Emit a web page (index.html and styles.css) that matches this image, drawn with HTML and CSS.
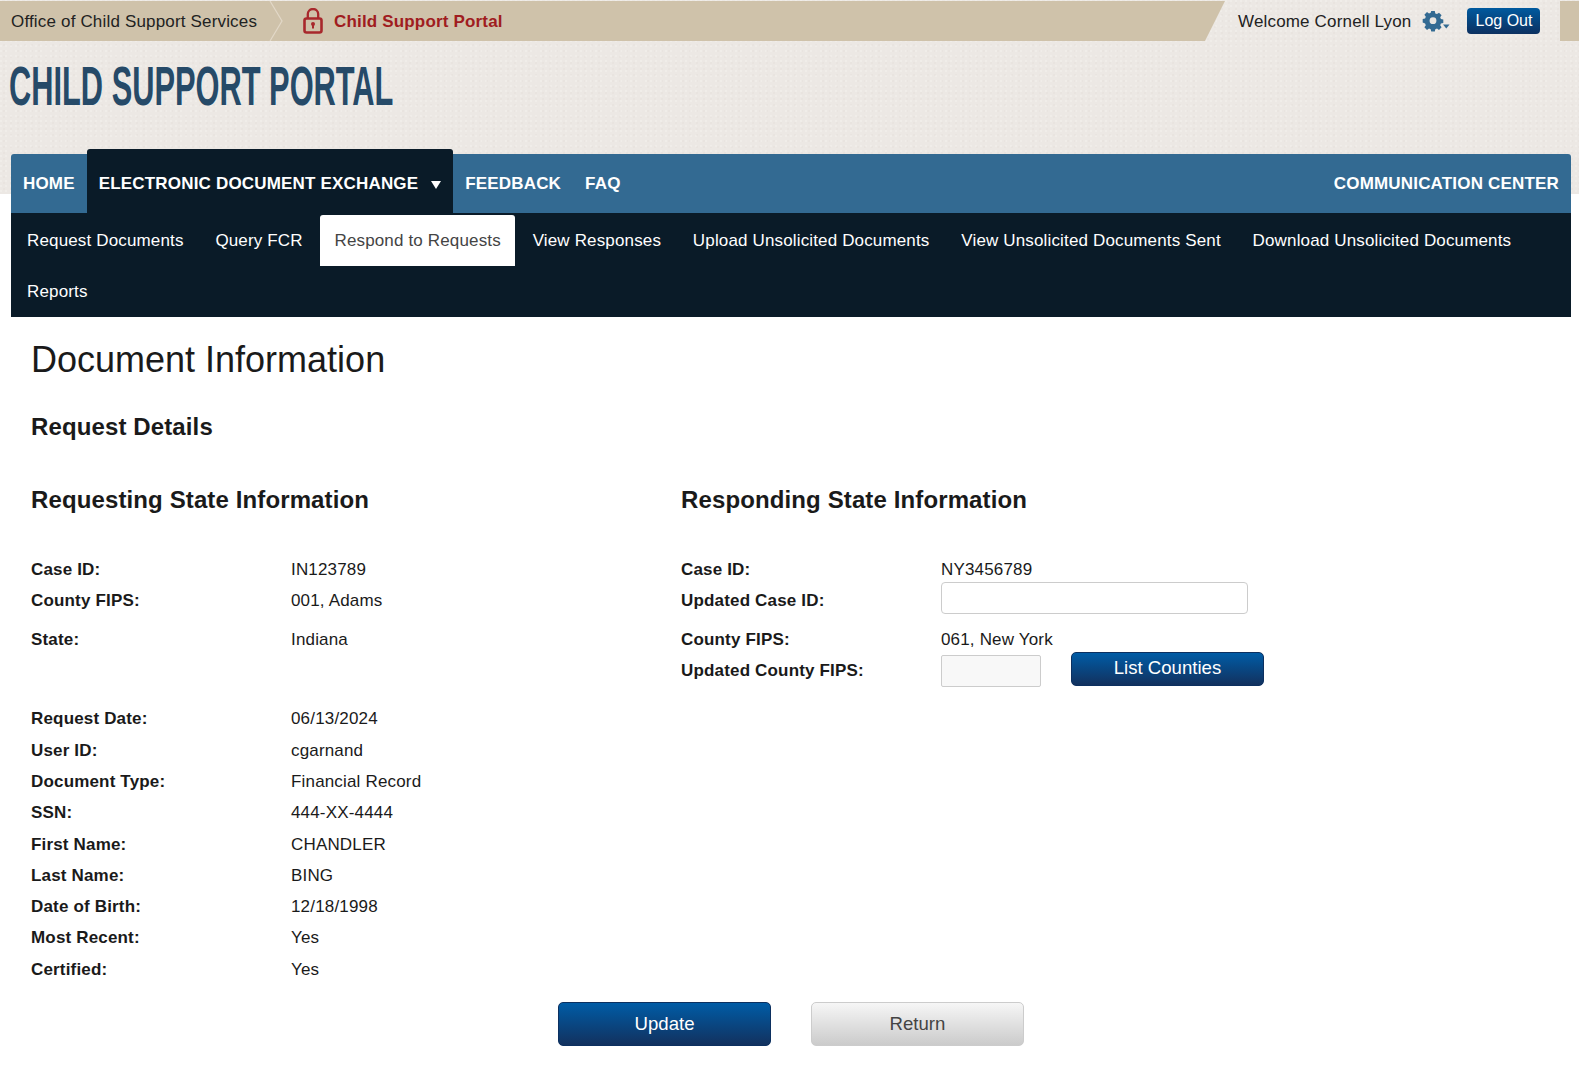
FILE: index.html
```html
<!DOCTYPE html>
<html lang="en">
<head>
<meta charset="utf-8">
<title>Child Support Portal</title>
<link rel="stylesheet" href="styles.css">
</head>
<body>
<header class="topbar">
  <div class="crumbs">
    <span class="office">Office of Child Support Services</span>
    <svg class="chevron" width="16" height="40" viewBox="0 0 16 40"><path d="M1 0 L13 20 L1 40" fill="none" stroke="#e2d8c8" stroke-width="1.2"/></svg>
    <svg class="lock" width="20" height="26" viewBox="0 0 20 26"><path d="M4.800 11 V6 a5.200 5 0 0 1 10.400 0 V11" fill="none" stroke="#a8282c" stroke-width="2.300"/><rect x="1.500" y="10.500" width="17" height="14" rx="2" fill="none" stroke="#a8282c" stroke-width="2.600"/><circle cx="10" cy="16" r="2" fill="#a8282c"/><rect x="9" y="16.500" width="2" height="4" fill="#a8282c"/></svg>
    <span class="portal">Child Support Portal</span>
  </div>
  <div class="user">
    <span class="welcome">Welcome Cornell Lyon</span>
    <svg class="gear" width="28" height="22" viewBox="0 0 28 22"><g fill="#336a92"><path d="M9.200 1h3.600l.5 2.400 1.700.7 2-1.400 2.600 2.600-1.400 2 .7 1.700 2.400.5v3.600l-2.400.5-.7 1.700 1.400 2-2.600 2.600-2-1.400-1.700.7-.5 2.400H9.200l-.5-2.400-1.700-.7-2 1.400-2.600-2.600 1.400-2-.7-1.700L.7 12.500V8.900l2.400-.5.7-1.700-1.400-2L5 2.100l2 1.400 1.700-.7z"/><path d="M21 14.500h6.500l-3.250 4z"/></g><circle cx="11" cy="10.700" r="3.400" fill="#e9e5e0"/></svg>
    <a class="logout" href="#">Log Out</a>
  </div>
  <div class="endcap"></div>
</header>

<div class="brand"><span class="brand-text">CHILD SUPPORT PORTAL</span></div>

<nav class="mainnav">
  <a class="navlink" href="#">HOME</a>
  <a class="navlink navlink-open" href="#">ELECTRONIC DOCUMENT EXCHANGE <span class="caret"></span></a>
  <a class="navlink" href="#">FEEDBACK</a>
  <a class="navlink" href="#">FAQ</a>
  <a class="navlink navlink-right" href="#">COMMUNICATION CENTER</a>
</nav>
<nav class="subnav">
  <a class="sublink" href="#">Request Documents</a>
  <a class="sublink" href="#">Query FCR</a>
  <a class="sublink sublink-active" href="#">Respond to Requests</a>
  <a class="sublink" href="#">View Responses</a>
  <a class="sublink" href="#">Upload Unsolicited Documents</a>
  <a class="sublink" href="#">View Unsolicited Documents Sent</a>
  <a class="sublink" href="#">Download Unsolicited Documents</a>
  <a class="sublink" href="#">Reports</a>
</nav>

<main class="content">
  <h1 class="title">Document Information</h1>
  <h2 class="subtitle">Request Details</h2>
  <div class="columns">
    <section class="column">
      <h2 class="coltitle">Requesting State Information</h2>
      <dl class="fields">
        <dt>Case ID:</dt><dd>IN123789</dd>
        <dt>County FIPS:</dt><dd>001, Adams</dd>
        <dt class="gap-top">State:</dt><dd class="gap-top">Indiana</dd>
        <dt class="gap-section">Request Date:</dt><dd class="gap-section">06/13/2024</dd>
        <dt>User ID:</dt><dd>cgarnand</dd>
        <dt>Document Type:</dt><dd>Financial Record</dd>
        <dt>SSN:</dt><dd>444-XX-4444</dd>
        <dt>First Name:</dt><dd>CHANDLER</dd>
        <dt>Last Name:</dt><dd>BING</dd>
        <dt>Date of Birth:</dt><dd>12/18/1998</dd>
        <dt>Most Recent:</dt><dd>Yes</dd>
        <dt>Certified:</dt><dd>Yes</dd>
      </dl>
    </section>
    <section class="column">
      <h2 class="coltitle">Responding State Information</h2>
      <dl class="fields">
        <dt>Case ID:</dt><dd>NY3456789</dd>
        <dt>Updated Case ID:</dt><dd><input class="textbox" type="text" aria-label="Updated Case ID"></dd>
        <dt class="gap-top">County FIPS:</dt><dd class="gap-top">061, New York</dd>
        <dt>Updated County FIPS:</dt>
        <dd class="inline-field"><input class="textbox textbox-short" type="text" disabled aria-label="Updated County FIPS"><button class="btn btn-primary btn-list" type="button">List Counties</button></dd>
      </dl>
    </section>
  </div>
  <div class="actions">
    <button class="btn btn-primary btn-wide" type="button">Update</button>
    <button class="btn btn-secondary btn-wide" type="button">Return</button>
  </div>
</main>
</body>
</html>
```
FILE: styles.css
```css
* { box-sizing: border-box; }
html, body { margin: 0; padding: 0; }
body {
  position: relative;
  font-family: "Liberation Sans", Arial, sans-serif;
  font-size: 17px;
  letter-spacing: .17px;
  color: #1a1a1a;
  background: #fff;
}
body::before {
  content: "";
  position: absolute;
  z-index: -1;
  top: 0;
  left: 0;
  right: 0;
  height: 194px;
  background-color: #ece8e4;
  background-image:
    radial-gradient(circle at 1px 1px, rgba(255,255,255,.2) 1px, transparent 1.5px),
    radial-gradient(circle at 4px 3px, rgba(120,100,80,.03) 1px, transparent 1.5px);
  background-size: 5px 5px, 7px 6px;
}
a { text-decoration: none; color: inherit; }

.topbar { display: flex; height: 41px; padding-top: 1px; }
.crumbs {
  width: 1225px;
  display: flex;
  align-items: center;
  background: #cfc2aa;
  padding-left: 11px;
  clip-path: polygon(0 0, 100% 0, 1205px 100%, 0 100%);
}
.office { width: 258px; padding-top: 2px; color: #222; }
.chevron { margin-right: 18px; }
.lock { margin-right: 11px; }
.portal { padding-top: 2px; font-weight: bold; color: #a01c20; }
.user { flex: 1; display: flex; align-items: center; padding-left: 13px; }
.welcome { padding-top: 2px; color: #222; }
.gear { margin-left: 11px; }
.logout {
  margin-left: 17px;
  height: 26px;
  width: 73px;
  font-size: 16px;
  line-height: 25px;
  text-align: center;
  color: #fff;
  letter-spacing: 0;
  border-radius: 4px;
  background: linear-gradient(#005a9f, #0c3060);
}
.endcap { width: 19px; background: #cfc2aa; }

.brand {
  height: 113px;
  padding: 13px 0 0 9px;
}
.brand-text {
  display: inline-block;
  font-weight: bold;
  font-size: 56px;
  line-height: 64px;
  letter-spacing: 0;
  white-space: nowrap;
  color: #264a68;
  transform: scaleX(.55);
  transform-origin: left center;
}

.mainnav {
  margin: 0 8px 0 11px;
  height: 59px;
  background: #336a92;
  border-radius: 3px 3px 0 0;
  display: flex;
  align-items: stretch;
  font-weight: bold;
  font-size: 17px;
  letter-spacing: .18px;
  color: #fff;
}
.navlink { padding: 20px 12px 0; }
.navlink-open {
  margin-top: -5px;
  padding-top: 25px;
  background: #0a1b28;
  border-radius: 3px 3px 0 0;
}
.navlink-right { margin-left: auto; }
.caret {
  display: inline-block;
  margin-left: 8px;
  border-style: solid;
  border-width: 8px 5px 0;
  border-color: #fff transparent transparent;
}

.subnav {
  margin: 0 8px 0 11px;
  padding: 2px 0 0 2px;
  background: #0a1b28;
  display: flex;
  flex-wrap: wrap;
  column-gap: 3.8px;
  letter-spacing: .15px;
  color: #fff;
}
.sublink { height: 51px; padding: 16px 14px 0; white-space: nowrap; }
.sublink-active { background: #fff; color: #444; border-radius: 3px 3px 0 0; }

.content { padding: 0 31px; }
.title { margin: 20px 0 0; font-size: 36px; line-height: 46px; font-weight: normal; letter-spacing: 0; }
.subtitle { margin: 29px 0 0; font-size: 24px; line-height: 30px; letter-spacing: .12px; }
.columns { display: flex; margin-top: 43px; }
.column { width: 650px; }
.column + .column { width: auto; flex: 1; }
.coltitle { margin: 0 0 39px; font-size: 24px; line-height: 30px; letter-spacing: .12px; }
.fields {
  margin: 0;
  display: grid;
  grid-template-columns: 260px 1fr;
  line-height: 31.3px;
}
.fields dt { font-weight: bold; }
.fields dd { margin: 0; }
.fields .gap-top { margin-top: 7px; }
.fields .gap-section { margin-top: 48.5px; }

.textbox {
  display: block;
  width: 307px;
  height: 32px;
  margin-top: -3px;
  border: 1px solid #ccc;
  border-radius: 4px;
  background: #fff;
}
.textbox-short { width: 100px; background: #f8f8f8; border-radius: 2px; margin-top: 0; }
.inline-field { display: flex; align-items: flex-start; }
.btn {
  font-family: inherit;
  font-size: 18.6px;
  letter-spacing: 0;
  border-radius: 5px;
  padding: 0;
}
.btn-primary {
  color: #fff;
  border: 1px solid #0c3060;
  background: linear-gradient(#005ca6, #12315e);
}
.btn-secondary {
  color: #444;
  border: 1px solid #ccc;
  background: linear-gradient(#f6f6f6, #cbcbcb);
}
.btn-list { width: 193px; height: 34px; margin: -3px 0 0 30px; padding-bottom: 2px; }
.btn-wide { width: 213px; height: 44px; }
.actions { display: flex; justify-content: center; gap: 40px; margin-top: 16.5px; padding-left: 3px; }
```
